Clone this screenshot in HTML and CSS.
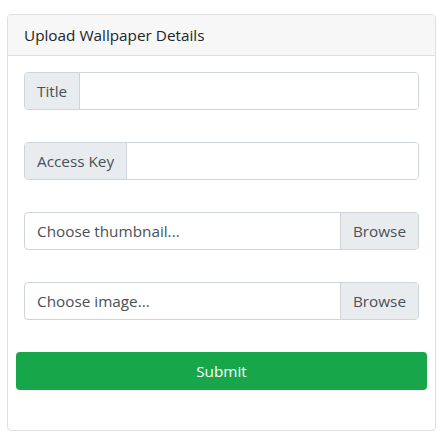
FILE: index.html
```html
<!DOCTYPE html>
<html lang="en">

<head>
    <meta charset="UTF-8">
    <meta name="viewport" content="width=device-width, initial-scale=1.0">
    <title>Upload Wallpaper</title>
    <link rel="stylesheet" href="styles.css">
</head>

<body>

    <div class="card">
        <div class="card-header">Upload Wallpaper Details</div>
        <form class="card-body" onsubmit="return false">

            <div class="input-group">
                <span class="addon">Title</span>
                <input type="text" class="field" id="title">
            </div>

            <div class="input-group">
                <span class="addon">Access Key</span>
                <input type="text" class="field" id="accessKey">
            </div>

            <label class="input-group file-group">
                <input type="file" class="file-input" id="thumbnail" accept="image/*">
                <span class="file-label">Choose thumbnail...</span>
                <span class="browse">Browse</span>
            </label>

            <label class="input-group file-group">
                <input type="file" class="file-input" id="image" accept="image/*">
                <span class="file-label">Choose image...</span>
                <span class="browse">Browse</span>
            </label>

            <button type="submit" class="submit-btn">Submit</button>
        </form>
    </div>

</body>

</html>
```

FILE: styles.css
```css
body {
    margin: 14px 6px 0 7px;
    font-family: "Open Sans", "Noto Sans", sans-serif;
    font-size: 15.3px;
    line-height: 24px;
    color: #212529;
    background: #fff;
}

.card {
    border: 1px solid #dfdfdf;
    border-radius: 4px;
    overflow: hidden;
}

.card-header {
    background: #f7f7f7;
    border-bottom: 1px solid #dfdfdf;
    padding: 8px 16px;
}

.card-body {
    display: flex;
    flex-direction: column;
    padding: 16px 8px 40px;
    margin: 0;
}

.input-group {
    display: flex;
    height: 38px;
    margin: 0 8px 32px;
    border: 1px solid #ced4da;
    border-radius: 4px;
    box-sizing: border-box;
    overflow: hidden;
    color: #495057;
}

.addon {
    background: #e9ecef;
    border-right: 1px solid #ced4da;
    padding: 6px 12px;
}

.field {
    flex: 1;
    min-width: 0;
    border: none;
    outline: none;
    padding: 6px 12px;
    font: inherit;
    color: #495057;
}

.file-group {
    cursor: pointer;
}

.file-input {
    display: none;
}

.file-label {
    flex: 1;
    padding: 6px 12px;
}

.browse {
    background: #e9ecef;
    border-left: 1px solid #ced4da;
    padding: 6px 12px;
}

.submit-btn {
    height: 38px;
    border: none;
    border-radius: 4px;
    background: #17a74a;
    color: #fff;
    font: inherit;
    cursor: pointer;
}
```
